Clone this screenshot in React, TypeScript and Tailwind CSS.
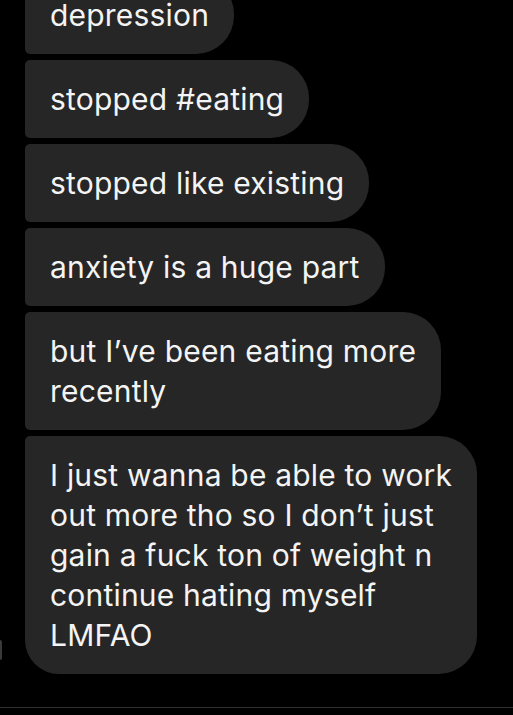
const messages: string[][] = [
  ['depression'],
  ['stopped #eating'],
  ['stopped like existing'],
  ['anxiety is a huge part'],
  ['but I’ve been eating more', 'recently'],
  [
    'I just wanna be able to work',
    'out more tho so I don’t just',
    'gain a fuck ton of weight n',
    'continue hating myself',
    'LMFAO',
  ],
];

const Bubble = ({ lines, last }: { lines: string[]; last: boolean }) => (
  <div
    className={`w-fit whitespace-nowrap rounded-r-[38px] bg-[#262626] px-[25px] py-[19px] text-[30px] leading-[40px] tracking-[0.2px] text-[#f4f4f4] ${
      last ? 'rounded-tl-[5px] rounded-bl-[34px]' : 'rounded-l-[5px]'
    }`}
  >
    {lines.map((line, i) => (
      <div key={i}>{line}</div>
    ))}
  </div>
);

export default function App() {
  return (
    <div className="relative h-[715px] overflow-hidden bg-black font-['Inter',sans-serif]">
      <div className="-mt-[24px] flex flex-col gap-[6px] pl-[25px]">
        {messages.map((lines, i) => (
          <Bubble key={i} lines={lines} last={i === messages.length - 1} />
        ))}
      </div>
      {/* edge of the avatar peeking in at the left */}
      <div className="absolute left-0 top-[640px] h-[20px] w-[2px] rounded-r-full bg-[#3a3a3a]" />
      <div className="mt-[33px] h-px bg-[#2e2e2e]" />
    </div>
  );
}
